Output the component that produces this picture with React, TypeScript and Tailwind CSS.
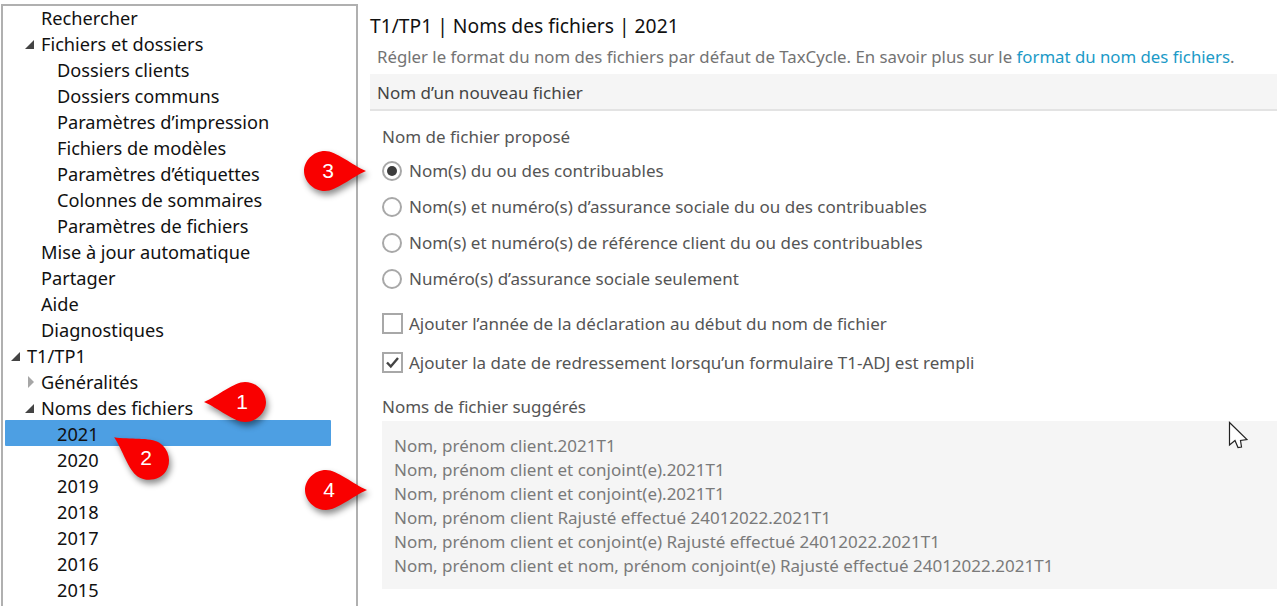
const fontStack = { fontFamily: '"Noto Sans", "Open Sans", sans-serif' }

function TreeArrow({ open }: { open: boolean }) {
  if (open) {
    return (
      <svg width="11" height="11" viewBox="0 0 11 11">
        <path d="M10 1 L10 10 L1 10 Z" fill="#444444" />
      </svg>
    )
  }
  return (
    <svg width="8" height="14" viewBox="0 0 8 14">
      <path d="M1 1 L7 7 L1 13 Z" fill="#a6a6a6" />
    </svg>
  )
}

function TreeRow({
  label,
  level,
  arrow,
  selected,
}: {
  label: string
  level: number
  arrow?: 'open' | 'closed'
  selected?: boolean
}) {
  const indent = level === 0 ? 'pl-[22px]' : level === 1 ? 'pl-[36px]' : 'pl-[52px]'
  const arrowLeft = level === 0 ? 'left-[5px]' : arrow === 'closed' ? 'left-[22px]' : 'left-[19px]'
  return (
    <div className={`relative h-[26px] w-[326px] pt-[2px] flex items-center text-[18.2px] text-[#111111] ${indent}`}>
      {selected && <span className="absolute left-0 right-0 -top-[1px] bottom-[1px] rounded-[1px] bg-[#4d9fe3]" />}
      {arrow && (
        <span className={`absolute top-0 h-[26px] flex items-center ${arrowLeft}`}>
          <TreeArrow open={arrow === 'open'} />
        </span>
      )}
      <span className="relative">{label}</span>
    </div>
  )
}

function Radio({ label, checked }: { label: string; checked?: boolean }) {
  return (
    <div className="h-[36px] flex items-center gap-[7px]">
      <span className="w-[20px] h-[20px] rounded-full border-2 border-[#a8a8a8] flex items-center justify-center">
        {checked && <span className="w-[10px] h-[10px] rounded-full bg-[#3c3c3c]" />}
      </span>
      <span>{label}</span>
    </div>
  )
}

function Checkbox({ label, checked }: { label: string; checked?: boolean }) {
  return (
    <div className="flex items-center gap-[6px] h-[21px]">
      <span className="w-[21px] h-[21px] border-2 border-[#a8a8a8] flex items-center justify-center">
        {checked && (
          <svg width="15" height="13" viewBox="0 0 15 13">
            <path d="M2 6.5 L5.8 10.5 L13 2" fill="none" stroke="#444444" strokeWidth="2.4" />
          </svg>
        )}
      </span>
      <span>{label}</span>
    </div>
  )
}

// numbered red callout, angle turns the tip around the number
function Callout({
  n,
  left,
  top,
  angle,
}: {
  n: number
  left: string
  top: string
  angle: number
}) {
  return (
    <div className={`absolute w-[110px] h-[110px] ${left} ${top}`}>
      <svg width="110" height="110" viewBox="-55 -55 110 110" className="drop-shadow-[2px_4px_3px_rgba(0,0,0,0.45)]">
        <path
          d="M-3 -20 C8 -20 24 -6 38 0 C24 6 8 20 -3 20 C-15 20 -24 10 -24 0 C-24 -10 -15 -20 -3 -20 Z"
          fill="#f90000"
          transform={`rotate(${angle})`}
        />
      </svg>
      <span
        className="absolute inset-0 flex items-center justify-center text-white text-[21px]"
        style={{ fontFamily: '"Liberation Sans", sans-serif' }}
      >
        {n}
      </span>
    </div>
  )
}

const suggested = [
  'Nom, prénom client.2021T1',
  'Nom, prénom client et conjoint(e).2021T1',
  'Nom, prénom client et conjoint(e).2021T1',
  'Nom, prénom client Rajusté effectué 24012022.2021T1',
  'Nom, prénom client et conjoint(e) Rajusté effectué 24012022.2021T1',
  'Nom, prénom client et nom, prénom conjoint(e) Rajusté effectué 24012022.2021T1',
]

export default function App() {
  return (
    <div className="relative w-[1277px] h-[606px] overflow-hidden bg-white flex" style={fontStack}>
      <div className="ml-[1px] mt-[4px] w-[357px] h-[602px] shrink-0 border-2 border-b-0 border-[#b0b0b0] pl-[2px]">
        <div className="-mt-[1px]">
          <TreeRow level={1} label="Rechercher" />
          <TreeRow level={1} label="Fichiers et dossiers" arrow="open" />
          <TreeRow level={2} label="Dossiers clients" />
          <TreeRow level={2} label="Dossiers communs" />
          <TreeRow level={2} label="Paramètres d’impression" />
          <TreeRow level={2} label="Fichiers de modèles" />
          <TreeRow level={2} label="Paramètres d’étiquettes" />
          <TreeRow level={2} label="Colonnes de sommaires" />
          <TreeRow level={2} label="Paramètres de fichiers" />
          <TreeRow level={1} label="Mise à jour automatique" />
          <TreeRow level={1} label="Partager" />
          <TreeRow level={1} label="Aide" />
          <TreeRow level={1} label="Diagnostiques" />
          <TreeRow level={0} label="T1/TP1" arrow="open" />
          <TreeRow level={1} label="Généralités" arrow="closed" />
          <TreeRow level={1} label="Noms des fichiers" arrow="open" />
          <TreeRow level={2} label="2021" selected />
          <TreeRow level={2} label="2020" />
          <TreeRow level={2} label="2019" />
          <TreeRow level={2} label="2018" />
          <TreeRow level={2} label="2017" />
          <TreeRow level={2} label="2016" />
          <TreeRow level={2} label="2015" />
        </div>
      </div>

      <div className="flex-1 min-w-0 ml-[12px]">
        <div className="h-[44px] pt-[12px] text-[19.25px] leading-[28px] text-[#111111]">T1/TP1 | Noms des fichiers | 2021</div>
        <div className="h-[30px] pl-[7px] text-[16.8px] leading-[26px] text-[#737373] whitespace-nowrap">
          Régler le format du nom des fichiers par défaut de TaxCycle. En savoir plus sur le{' '}
          <span className="text-[#1b9ac7]">format du nom des fichiers</span>.
        </div>
        <div className="h-[37px] bg-[#f5f5f5] border-b-2 border-[#e3e3e3] pl-[7px] text-[17px] leading-[37px] text-[#444444]">
          Nom d’un nouveau fichier
        </div>
        <div className="pl-[12px] text-[17px] text-[#555555]">
          <div className="h-[25px] mt-[13px] leading-[25px]">Nom de fichier proposé</div>
          <div className="mt-[4px]">
            <Radio label="Nom(s) du ou des contribuables" checked />
            <Radio label="Nom(s) et numéro(s) d’assurance sociale du ou des contribuables" />
            <Radio label="Nom(s) et numéro(s) de référence client du ou des contribuables" />
            <Radio label="Numéro(s) d’assurance sociale seulement" />
          </div>
          <div className="mt-[16px] flex flex-col gap-[18px]">
            <Checkbox label="Ajouter l’année de la déclaration au début du nom de fichier" />
            <Checkbox label="Ajouter la date de redressement lorsqu’un formulaire T1-ADJ est rempli" checked />
          </div>
          <div className="h-[25px] mt-[21px] leading-[25px]">Noms de fichier suggérés</div>
          <div className="mt-[2px] h-[168px] bg-[#f5f5f5] pl-[12px] pt-[13px] text-[17px] leading-[24px] text-[#7a7a7a]">
            {suggested.map((line, i) => (
              <div key={i}>{line}</div>
            ))}
          </div>
        </div>
      </div>

      <Callout n={1} left="left-[187px]" top="top-[347px]" angle={180} />
      <Callout n={2} left="left-[91px]" top="top-[403px]" angle={213} />
      <Callout n={3} left="left-[273px]" top="top-[116px]" angle={0} />
      <Callout n={4} left="left-[274px]" top="top-[435px]" angle={0} />

      <svg width="20" height="30" viewBox="0 0 20 30" className="absolute left-[1228px] top-[421px]">
        <path
          d="M1.5 1.5 L1.5 24 L7 19.5 L10 26.5 L13.5 26 L12.5 19.5 L19 18.5 Z"
          fill="#ffffff"
          stroke="#222222"
          strokeWidth="1.2"
        />
      </svg>
    </div>
  )
}
